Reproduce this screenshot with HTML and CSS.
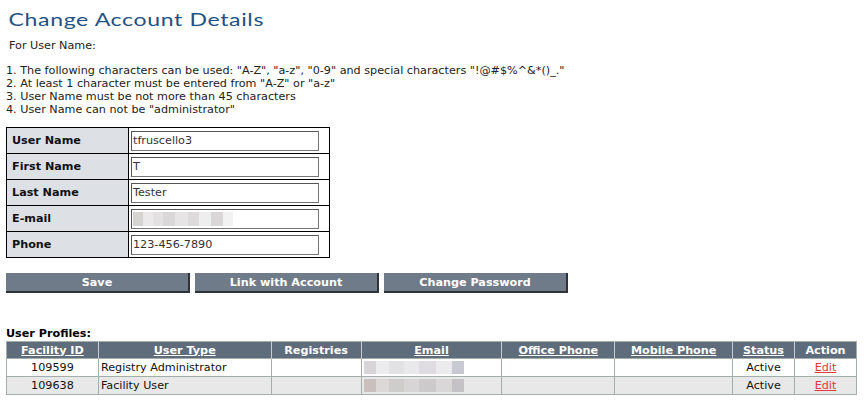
FILE: index.html
```html
<!DOCTYPE html>
<html>
<head>
<meta charset="utf-8">
<link rel="stylesheet" href="styles.css">
</head>
<body>
<div class="page">
  <h1 class="title">Change Account Details</h1>
  <p class="for-user">For User Name:</p>
  <div class="rules">
    <div>1. The following characters can be used: "A-Z", "a-z", "0-9" and special characters "!@#$%^&amp;*()_."</div>
    <div>2. At least 1 character must be entered from "A-Z" or "a-z"</div>
    <div>3. User Name must be not more than 45 characters</div>
    <div>4. User Name can not be "administrator"</div>
  </div>

  <table class="form">
    <tr><th>User Name</th><td><div class="field">tfruscello3</div></td></tr>
    <tr><th>First Name</th><td><div class="field">T</div></td></tr>
    <tr><th>Last Name</th><td><div class="field">Tester</div></td></tr>
    <tr><th>E-mail</th><td><div class="field"><span class="blur blur-in"></span></div></td></tr>
    <tr><th>Phone</th><td><div class="field">123-456-7890</div></td></tr>
  </table>

  <div class="buttons">
    <div class="btn">Save</div>
    <div class="btn">Link with Account</div>
    <div class="btn">Change Password</div>
  </div>

  <div class="profiles-title">User Profiles:</div>
  <table class="profiles">
    <thead>
      <tr>
        <th class="c1"><a>Facility ID</a></th>
        <th class="c2"><a>User Type</a></th>
        <th class="c3">Registries</th>
        <th class="c4"><a>Email</a></th>
        <th class="c5"><a>Office Phone</a></th>
        <th class="c6"><a>Mobile Phone</a></th>
        <th class="c7"><a>Status</a></th>
        <th class="c8">Action</th>
      </tr>
    </thead>
    <tbody>
      <tr>
        <td class="center">109599</td>
        <td>Registry Administrator</td>
        <td></td>
        <td><span class="blur blur-a"></span></td>
        <td></td>
        <td></td>
        <td class="center">Active</td>
        <td class="center"><a class="edit">Edit</a></td>
      </tr>
      <tr class="alt">
        <td class="center">109638</td>
        <td>Facility User</td>
        <td></td>
        <td><span class="blur blur-b"></span></td>
        <td></td>
        <td></td>
        <td class="center">Active</td>
        <td class="center"><a class="edit">Edit</a></td>
      </tr>
    </tbody>
  </table>
</div>
</body>
</html>
```

FILE: styles.css
```css
html, body {
  margin: 0;
  padding: 0;
  background: #ffffff;
}

body {
  font-family: "DejaVu Sans", Verdana, sans-serif;
  font-size: 11.2px;
  color: #000;
  overflow: hidden;
}

.page {
  padding: 0 6px;
}

.title {
  display: inline-block;
  margin: 0;
  padding: 8px 0 0 2px;
  font-family: Lato, "DejaVu Sans", sans-serif;
  font-weight: 400;
  font-size: 18px;
  letter-spacing: 0.5px;
  line-height: 22px;
  color: #1f5283;
  transform: scaleX(1.28);
  transform-origin: left center;
}

.for-user {
  margin: 9px 0 0 3px;
  line-height: 13px;
  color: #222;
}

.rules {
  margin-top: 12px;
  line-height: 13px;
  color: #222;
}

.form {
  margin-top: 11px;
  border-collapse: collapse;
  border: 1px solid #000;
}

.form th,
.form td {
  border: 1px solid #000;
  height: 25px;
  padding: 0;
}

.form th {
  width: 116px;
  padding-left: 5px;
  text-align: left;
  font-weight: bold;
  background: #dde0e5;
  color: #111;
}

.form td {
  width: 198px;
  padding-left: 2px;
}

.field {
  box-sizing: border-box;
  width: 188px;
  height: 20px;
  border: 1px solid #767676;
  border-top-color: #555;
  border-left-color: #555;
  padding-left: 1px;
  line-height: 18px;
  color: #333;
  display: flex;
  align-items: center;
}

.blur {
  display: inline-block;
  height: 14px;
  background:
    linear-gradient(90deg,
      #d6d3d3 0 10%, #ebe9ea 10% 20%, #e3e1e2 20% 30%, #d9d7d8 30% 42%,
      #e6e4e5 42% 55%, #dcdadb 55% 66%, #eeeeee 66% 78%, #dad7d8 78% 90%, #f2f2f2 90% 100%);
}

.blur-in {
  width: 100px;
}

.buttons {
  display: flex;
  gap: 5px;
  margin-top: 15px;
}

.btn {
  box-sizing: border-box;
  width: 184px;
  height: 20px;
  background: #6f7b88;
  border-right: 2px solid #2f3339;
  border-bottom: 2px solid #2f3339;
  color: #fff;
  font-weight: bold;
  text-align: center;
  line-height: 19px;
}

.profiles-title {
  margin-top: 34px;
  font-weight: bold;
  line-height: 14px;
}

.profiles {
  width: 851px;
  border-collapse: collapse;
  border: 1px solid #a3aeab;
}

.profiles th {
  background: #5f6c7b;
  color: #fff;
  font-weight: bold;
  height: 16px;
  padding: 0;
  border-left: 1px solid #c6ccd3;
  text-align: center;
}

.profiles th:first-child {
  border-left: none;
}

.profiles th a {
  color: #fff;
  text-decoration: underline;
}

.profiles td {
  height: 17px;
  padding: 0 0 0 2px;
  border: 1px solid #a3aeab;
  color: #111;
}

.profiles td.center {
  text-align: center;
  padding: 0;
}

.profiles tr.alt td {
  background: #e8e8e8;
}

.profiles .c1 { width: 91px; }
.profiles .c2 { width: 172px; }
.profiles .c3 { width: 89px; }
.profiles .c4 { width: 140px; }
.profiles .c5 { width: 112px; }
.profiles .c6 { width: 117px; }
.profiles .c7 { width: 61px; }
.profiles .c8 { width: 61px; }

.blur-a {
  width: 100px;
  height: 13px;
  vertical-align: middle;
  background: linear-gradient(90deg,
    #d8d5d8 0 12%, #ecebed 12% 25%, #e2e1e4 25% 40%, #e9e8eb 40% 55%,
    #dedce0 55% 72%, #ebeaed 72% 88%, #c9c9d3 88% 100%);
}

.blur-b {
  width: 100px;
  height: 13px;
  vertical-align: middle;
  background: linear-gradient(90deg,
    #c9c0bd 0 12%, #dcd8d8 12% 25%, #cfcccc 25% 40%, #d8d5d6 40% 55%,
    #cdcacb 55% 72%, #d9d7d8 72% 88%, #c4c2c5 88% 100%);
}

.edit {
  color: #e03a3a;
  text-decoration: underline;
}
```
